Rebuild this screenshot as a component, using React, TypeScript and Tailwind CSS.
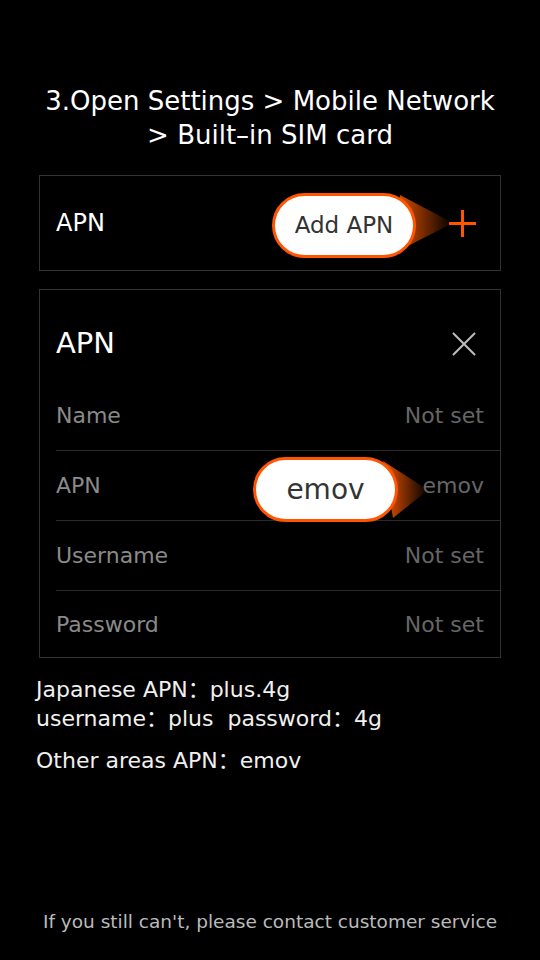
import type { ReactNode } from 'react';

const font = { fontFamily: '"DejaVu Sans", "Noto Sans CJK SC", sans-serif' };

// orange callout tail, drawn in card coords
function Tail({ id, points, x1, x2 }: { id: string; points: string; x1: number; x2: number }) {
  return (
    <svg className="absolute left-0 top-0 pointer-events-none" width="460" height="380" viewBox="0 0 460 380">
      <defs>
        <linearGradient id={id} gradientUnits="userSpaceOnUse" x1={x1} y1="0" x2={x2} y2="0">
          <stop offset="0" stopColor="#ff5a00" stopOpacity="0.8" />
          <stop offset="1" stopColor="#ff5a00" stopOpacity="0" />
        </linearGradient>
      </defs>
      <polygon points={points} fill={`url(#${id})`} />
    </svg>
  );
}

function Pill({ children, className }: { children: ReactNode; className: string }) {
  return (
    <div
      className={`absolute flex items-center justify-center rounded-full bg-white border-[3px] border-[#ff5500] text-[#333] ${className}`}
    >
      {children}
    </div>
  );
}

function Row({ label, value, last }: { label: string; value: string; last?: boolean }) {
  return (
    <div
      className={`ml-[16px] pr-[16px] flex items-center justify-between ${last ? 'h-[66px]' : 'h-[70px] border-b border-[#2a2a2a]'}`}
    >
      <span className="text-[22px] text-[#8a8a8a]">{label}</span>
      <span className="text-[22px] text-[#666]">{value}</span>
    </div>
  );
}

export default function App() {
  return (
    <div className="w-[540px] h-[960px] bg-black flex flex-col text-white" style={font}>
      {/* Title */}
      <div className="pt-[84px] text-center text-[26px] leading-[34px]">
        <div>3.Open Settings &gt; Mobile Network</div>
        <div>&gt; Built–in SIM card</div>
      </div>

      {/* APN entry card */}
      <div className="relative mx-[39px] mt-[23px] h-[96px] border border-[#333] flex items-center pl-[16px]">
        <span className="text-[24px]">APN</span>
        <Tail id="t1" points="360,19 413,47 360,74" x1={362} x2={413} />
        <Pill className="left-[232px] top-[17px] w-[144px] h-[65px] text-[23px]">Add APN</Pill>
        <svg className="absolute left-[408px] top-[33px]" width="29" height="29" viewBox="0 0 29 29">
          <path d="M14.5 1v27M1 14.5h27" stroke="#ff5500" strokeWidth="3" />
        </svg>
      </div>

      {/* APN edit card */}
      <div className="relative mx-[39px] mt-[18px] border border-[#333]">
        <div className="h-[91px] flex items-start justify-between pl-[16px] pr-[24px] pt-[36px]">
          <span className="text-[29px] leading-[34px]">APN</span>
          <svg className="mt-[6px]" width="24" height="24" viewBox="0 0 24 24">
            <path d="M1 1l22 22M23 1L1 23" stroke="#bdbdbd" strokeWidth="2" />
          </svg>
        </div>
        <Row label="Name" value="Not set" />
        <Row label="APN" value="emov" />
        <Row label="Username" value="Not set" />
        <Row label="Password" value="Not set" last />
        <Tail id="t2" points="343,171 388,200 353,228" x1={350} x2={388} />
        <Pill className="left-[213px] top-[167px] w-[145px] h-[65px] text-[28px]">emov</Pill>
      </div>

      {/* Info */}
      <div className="pl-[36px] mt-[17px] text-[22px] leading-[29px] text-[#f0f0f0]">
        <div>Japanese APN：plus.4g</div>
        <div>username：plus&nbsp;&nbsp;password：4g</div>
        <div className="mt-[13px]">Other areas APN：emov</div>
      </div>

      {/* Footer */}
      <div className="mt-auto pb-[26px] text-center text-[18.5px] leading-[24px] text-[#bbb]">
        If you still can't, please contact customer service
      </div>
    </div>
  );
}
